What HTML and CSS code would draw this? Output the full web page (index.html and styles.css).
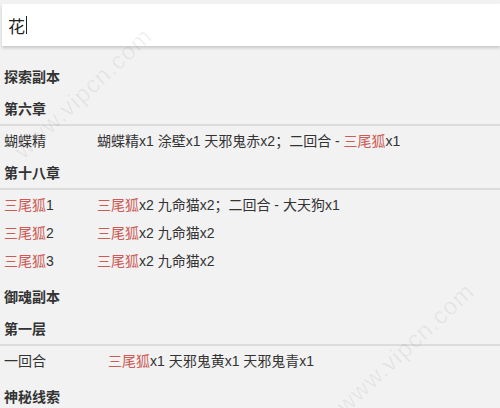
FILE: index.html
```html
<!DOCTYPE html>
<html lang="zh-CN">
<head>
  <meta charset="UTF-8">
  <title>攻略查询</title>
  <link rel="stylesheet" href="styles.css">
</head>
<body>
  <!-- search box -->
  <div class="search">
    <span class="query">花</span><span class="caret"></span>
  </div>

  <!-- 探索副本 -->
  <h2 class="section-title">探索副本</h2>
  <h3 class="chapter">第六章</h3>
  <div class="list">
    <div class="row">
      <span class="name">蝴蝶精</span>
      <span class="detail">蝴蝶精x1 涂壁x1 天邪鬼赤x2；二回合 - <em>三尾狐</em>x1</span>
    </div>
  </div>

  <h3 class="chapter">第十八章</h3>
  <div class="list">
    <div class="row">
      <span class="name"><em>三尾狐</em>1</span>
      <span class="detail"><em>三尾狐</em>x2 九命猫x2；二回合 - 大天狗x1</span>
    </div>
    <div class="row">
      <span class="name"><em>三尾狐</em>2</span>
      <span class="detail"><em>三尾狐</em>x2 九命猫x2</span>
    </div>
    <div class="row">
      <span class="name"><em>三尾狐</em>3</span>
      <span class="detail"><em>三尾狐</em>x2 九命猫x2</span>
    </div>
  </div>

  <!-- 御魂副本 -->
  <h2 class="section-title">御魂副本</h2>
  <h3 class="chapter">第一层</h3>
  <div class="list list-wide">
    <div class="row">
      <span class="name">一回合</span>
      <span class="detail"><em>三尾狐</em>x1 天邪鬼黄x1 天邪鬼青x1</span>
    </div>
  </div>

  <h2 class="section-title">神秘线索</h2>

  <!-- watermark -->
  <div class="mark mark-top">www.vipcn.com</div>
  <div class="mark mark-bottom">www.vipcn.com</div>
</body>
</html>
```

FILE: styles.css
```css
body {
  margin: 0;
  background: #f2f2f2;
  color: #333;
  font-family: "Liberation Sans", "Noto Sans CJK SC", sans-serif;
  font-size: 14px;
  overflow: hidden;
  position: relative;
  height: 408px;
}
.search {
  margin: 4px 0 0 2px;
  height: 42px;
  background: #fff;
  box-shadow: 0 2px 3px rgba(0,0,0,0.18);
  display: flex;
  align-items: center;
  padding-left: 6px;
}
.query {
  font-size: 17px;
  color: #222;
}
.caret {
  width: 1px;
  height: 18px;
  background: #222;
  margin-left: 1px;
}
.section-title {
  margin: 15px 0 0;
  padding-left: 4px;
  font-size: 14px;
  font-weight: bold;
  line-height: 32px;
  height: 33px;
}
.list + .section-title {
  margin-top: 7px;
}
.chapter {
  margin: 0;
  padding-left: 4px;
  font-size: 14px;
  font-weight: bold;
  line-height: 30px;
  height: 30px;
}
.list + .chapter {
  margin-top: 4px;
}
.list {
  border-top: 2px solid #dcdcdc;
}
.row {
  display: flex;
  height: 28px;
  align-items: center;
}
.name {
  width: 93px;
  padding-left: 4px;
  flex-shrink: 0;
}
.list-wide .name {
  width: 104px;
}
em {
  font-style: normal;
  color: #cc5a55;
}
.mark {
  position: absolute;
  font-family: "Liberation Sans", sans-serif;
  font-size: 24px;
  letter-spacing: 1px;
  color: rgba(0,0,0,0.06);
  transform: rotate(-43deg);
  transform-origin: left center;
  white-space: nowrap;
}
.mark-top {
  left: 18px;
  top: 140px;
}
.mark-bottom {
  left: 340px;
  top: 395px;
}
```
